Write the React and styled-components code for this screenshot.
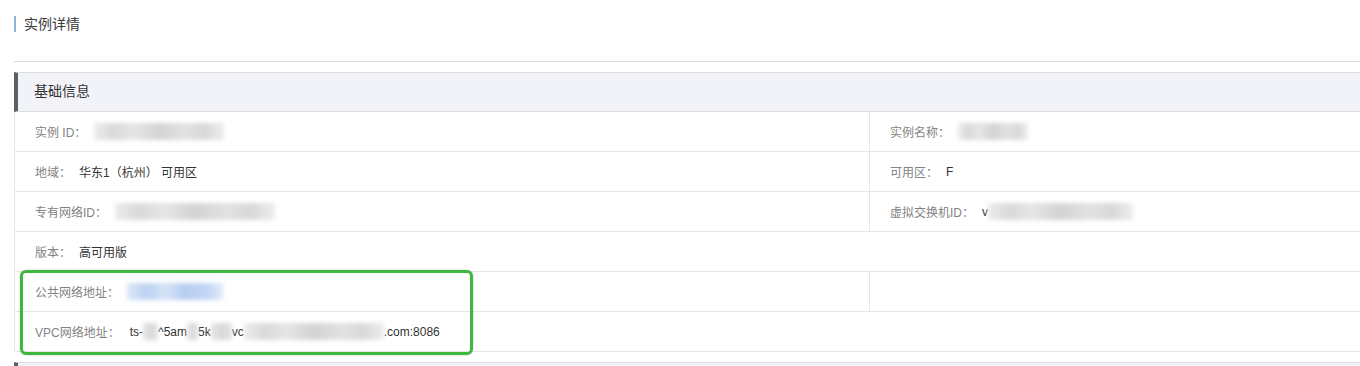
import styled, { createGlobalStyle } from "styled-components";

const GlobalStyle = createGlobalStyle`
  html, body {
    margin: 0;
    padding: 0;
    background: #fff;
    overflow: hidden;
  }
  body {
    font-family: "Liberation Sans", "Noto Sans CJK SC", sans-serif;
    color: #333;
  }
`;

const rows = [
  [
    { label: "实例 ID", blur: [{ w: 130, tone: "gray" }] },
    { label: "实例名称", blur: [{ w: 70, tone: "gray" }] },
  ],
  [
    { label: "地域", value: "华东1（杭州） 可用区" },
    { label: "可用区", value: "F" },
  ],
  [
    { label: "专有网络ID", blur: [{ w: 160, tone: "gray" }] },
    { label: "虚拟交换机ID", value: "v", blur: [{ w: 145, tone: "gray" }] },
  ],
  [{ label: "版本", value: "高可用版", full: true }],
  [{ label: "公共网络地址", blur: [{ w: 96, tone: "blue" }] }, { empty: true }],
  [{ label: "VPC网络地址", vpc: true, full: true }],
];

function Blur({ w, tone }) {
  return <BlurBox $w={w} $tone={tone} />;
}

function CellContent({ cell }) {
  if (cell.empty) return null;
  return (
    <>
      <Label>{cell.label}：</Label>
      {cell.vpc ? (
        <Value $shift={2}>
          ts-
          <Blur w={15} tone="gray" />
          ^5am
          <Blur w={11} tone="gray" />
          5k
          <Blur w={21} tone="gray" />
          vc
          <Blur w={140} tone="gray" />
          .com:8086
        </Value>
      ) : (
        <Value>
          {cell.value}
          {cell.blur && cell.blur.map((b, i) => <Blur key={i} {...b} />)}
        </Value>
      )}
    </>
  );
}

export default function App() {
  return (
    <Page>
      <GlobalStyle />
      <PageTitle>实例详情</PageTitle>
      <Divider />
      <Section>
        <SectionHeader>基础信息</SectionHeader>
        <Table>
          {rows.map((row, i) => (
            <Row key={i}>
              {row.map((cell, j) => (
                <Cell key={j} $full={cell.full} $right={j === 1}>
                  <CellContent cell={cell} />
                </Cell>
              ))}
            </Row>
          ))}
        </Table>
      </Section>
      <Section>
        <SectionHeader />
      </Section>
      <Highlight />
    </Page>
  );
}

const Page = styled.div`
  position: relative;
  height: 350px;
  overflow: hidden;
  padding: 16px 0 0 14px;
  margin-right: -20px;
`;

const PageTitle = styled.div`
  height: 16px;
  line-height: 16px;
  font-size: 14px;
  color: #3a3a3a;
  border-left: 2px solid #8fb6d8;
  padding-left: 8px;
`;

const Divider = styled.div`
  margin-top: 29px;
  border-top: 1px solid #dddddd;
`;

const Section = styled.div`
  margin-top: 10px;
`;

const SectionHeader = styled.div`
  height: 38px;
  line-height: 37px;
  background: #f2f3f8;
  border-top: 1px solid #dcdcdc;
  border-bottom: 1px solid #dcdcdc;
  border-left: 4px solid #5c5f67;
  padding-left: 16px;
  font-size: 14px;
  color: #333;
`;

const Table = styled.div`
  border-left: 1px solid #e6e6e6;
`;

const Row = styled.div`
  display: grid;
  grid-template-columns: 854px 1fr;
  height: 39px;
  border-bottom: 1px solid #e6e6e6;
`;

const Cell = styled.div`
  display: flex;
  align-items: center;
  padding-left: 20px;
  font-size: 12px;
  grid-column: ${(p) => (p.$full ? "1 / span 2" : "auto")};
  border-left: ${(p) => (p.$right ? "1px solid #e6e6e6" : "none")};
`;

const Label = styled.span`
  color: #838383;
  margin-right: 8px;
  white-space: nowrap;
`;

const Value = styled.span`
  display: flex;
  align-items: center;
  margin-left: ${(p) => p.$shift || 0}px;
  color: #333;
  white-space: nowrap;
`;

const BlurBox = styled.span`
  display: inline-block;
  width: ${(p) => p.$w}px;
  height: 17px;
  background: ${(p) =>
    p.$tone === "blue"
      ? "linear-gradient(90deg, #dbe7f7 0%, #bcd2f2 20%, #d6e3f6 40%, #b7cef2 60%, #c4d7f4 85%, #e3ecf9 100%)"
      : "linear-gradient(90deg, #ececec 0%, #d9d9d9 15%, #e6e6e6 30%, #d3d3d3 50%, #e2e2e2 70%, #d8d8d8 85%, #eeeeee 100%)"};
  filter: blur(2px);
`;

const Highlight = styled.div`
  position: absolute;
  left: 20px;
  top: 270px;
  width: 447px;
  height: 79px;
  border: 3px solid #3fb73f;
  border-radius: 6px;
  box-shadow: 0 0 2px rgba(0, 0, 0, 0.25);
  pointer-events: none;
`;
